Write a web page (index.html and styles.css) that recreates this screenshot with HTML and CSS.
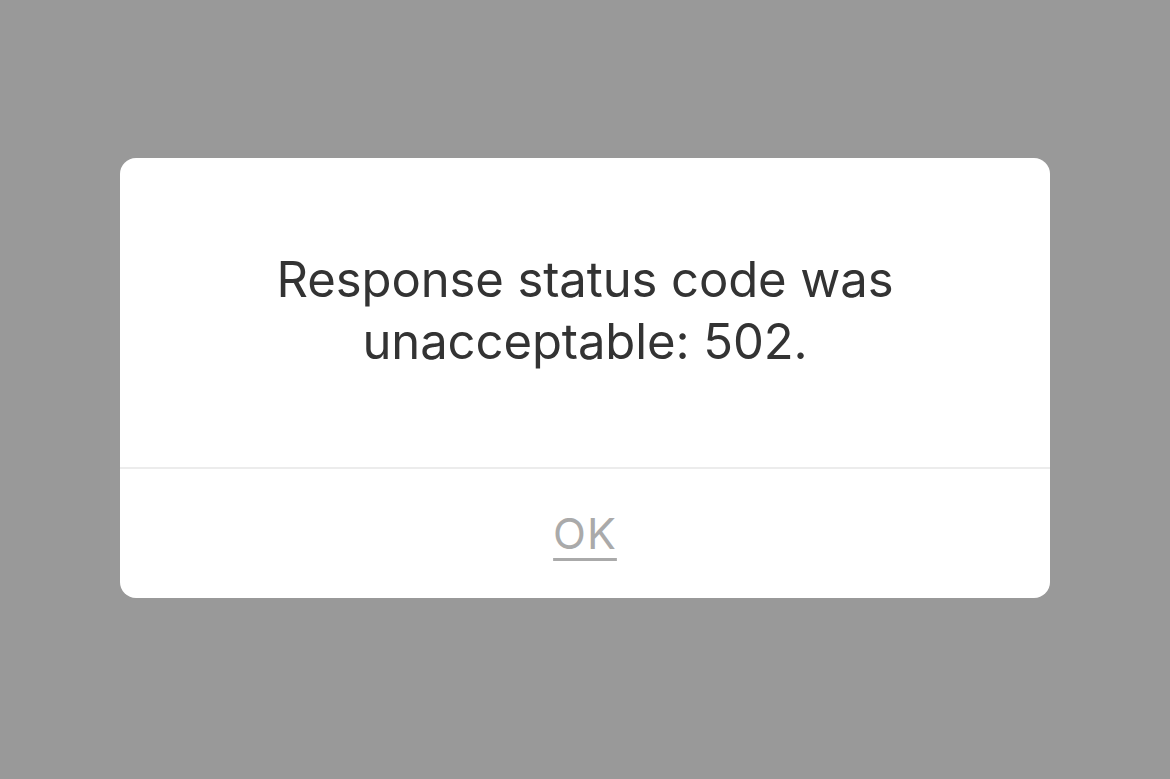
FILE: index.html
```html
<!DOCTYPE html>
<html>
<head>
<meta charset="utf-8">
<link rel="stylesheet" href="styles.css">
</head>
<body>
<div class="screen">
  <div class="alert">
    <div class="message">Response status code was<br>unacceptable: 502.</div>
    <div class="actions">
      <a class="ok">OK</a>
    </div>
  </div>
</div>
</body>
</html>
```
FILE: styles.css
```css
html, body {
  margin: 0;
  padding: 0;
  background: #999999;
}
.screen {
  width: 1170px;
  height: 779px;
  display: flex;
  justify-content: center;
  padding-top: 158px;
  box-sizing: border-box;
  font-family: Inter, "Noto Sans", sans-serif;
}
.alert {
  width: 930px;
  height: 440px;
  background: #ffffff;
  border-radius: 16px;
  display: flex;
  flex-direction: column;
}
.message {
  height: 311px;
  box-sizing: border-box;
  padding-top: 91px;
  text-align: center;
  font-size: 49px;
  line-height: 62px;
  color: #333333;
  letter-spacing: -0.1px;
  border-bottom: 2px solid #ececec;
}
.actions {
  flex: 1;
  display: flex;
  justify-content: center;
  padding-top: 38px;
}
.ok {
  font-size: 43px;
  line-height: 52px;
  height: 52px;
  color: #aaaaaa;
  letter-spacing: 1px;
  text-decoration: underline;
  text-decoration-thickness: 3px;
  text-underline-offset: 9px;
}
```
